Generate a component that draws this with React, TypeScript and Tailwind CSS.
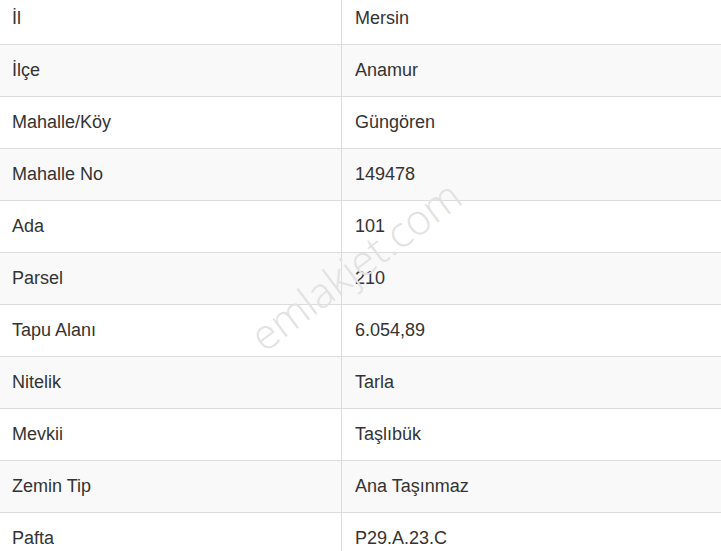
import React from 'react';

const rows: [string, string][] = [
  ['İl', 'Mersin'],
  ['İlçe', 'Anamur'],
  ['Mahalle/Köy', 'Güngören'],
  ['Mahalle No', '149478'],
  ['Ada', '101'],
  ['Parsel', '210'],
  ['Tapu Alanı', '6.054,89'],
  ['Nitelik', 'Tarla'],
  ['Mevkii', 'Taşlıbük'],
  ['Zemin Tip', 'Ana Taşınmaz'],
  ['Pafta', 'P29.A.23.C'],
];

const App: React.FC = () => {
  return (
    <div className="relative w-[721px] h-[551px] overflow-hidden bg-white font-['Liberation_Sans',Arial,sans-serif] text-[18px] text-[#333]">
      <div className="-mt-[7px]">
        {rows.map(([label, value], i) => (
          <div
            key={label}
            className={`flex h-[52px] border-b border-[#dcdcdc] ${i % 2 === 1 ? 'bg-[#f9f9f9]' : 'bg-white'}`}
          >
            <div className="w-[342px] shrink-0 border-r border-[#dcdcdc] pl-[12px] flex items-center">{label}</div>
            <div className="flex-1 pl-[13px] flex items-center">{value}</div>
          </div>
        ))}
      </div>
      <div className="pointer-events-none absolute left-[355px] top-[265px] -translate-x-1/2 -translate-y-1/2 -rotate-[37deg] font-['Open_Sans',sans-serif] font-light text-[42px] text-[#e2e2e2] whitespace-nowrap leading-none">
        emlakjet.com
      </div>
    </div>
  );
};

export default App;
